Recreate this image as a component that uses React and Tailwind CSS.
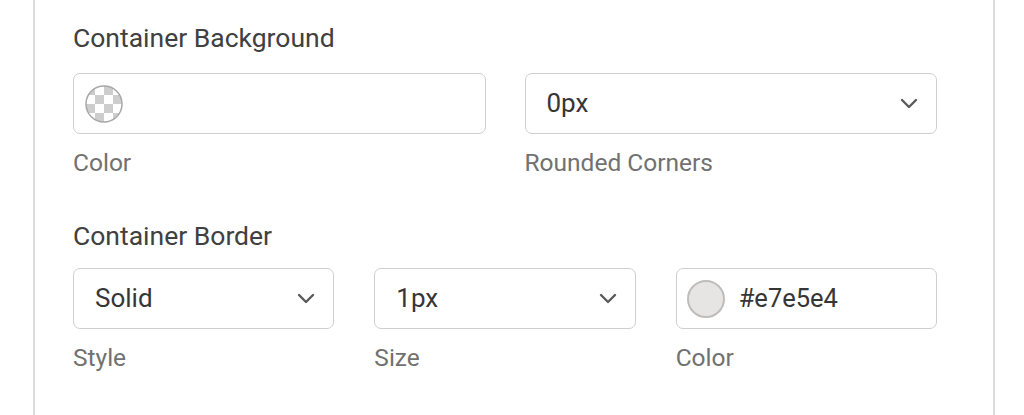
import React from "react";

function Chevron() {
  return (
    <svg width="18" height="11" viewBox="0 0 18 11" fill="none" className="shrink-0">
      <path d="M2 2l7 7 7-7" stroke="#5a5a5a" strokeWidth="2.4" strokeLinecap="round" strokeLinejoin="round" />
    </svg>
  );
}

function Checker() {
  return (
    <svg width="40" height="40" viewBox="0 0 40 40" className="shrink-0">
      <defs>
        <pattern id="chk" width="18" height="18" patternUnits="userSpaceOnUse" x="2" y="2">
          <rect width="18" height="18" fill="#ffffff" />
          <rect width="9" height="9" fill="#cdcdcd" />
          <rect x="9" y="9" width="9" height="9" fill="#cdcdcd" />
        </pattern>
        <clipPath id="cc">
          <circle cx="20" cy="20" r="18" />
        </clipPath>
      </defs>
      <rect width="40" height="40" fill="url(#chk)" clipPath="url(#cc)" />
      <circle cx="20" cy="20" r="18" fill="none" stroke="#a8a8a8" strokeWidth="1.5" />
    </svg>
  );
}

function Select({ value }) {
  return (
    <div className="flex h-[61px] items-center justify-between rounded-[7px] border border-[#cfcfcf] bg-white pl-[21px] pr-[18px]">
      <span className="text-[26px] text-[#363636]">{value}</span>
      <Chevron />
    </div>
  );
}

function Label({ children }) {
  return <div className="mt-[14px] text-[24.5px] leading-[30px] text-[#717171]">{children}</div>;
}

export default function App() {
  return (
    <div className="h-[415px] overflow-hidden bg-white" style={{ fontFamily: "Roboto, 'Liberation Sans', sans-serif" }}>
      <div className="ml-[33px] h-full w-[962px] border-x-2 border-[#dcdcdc] pl-[38px] pt-[20px]">
        <h3 className="text-[26.5px] leading-[36px] text-[#404040]">Container Background</h3>
        <div className="mt-[17px] grid w-[864px] grid-cols-2 gap-x-[39px]">
          <div>
            <div className="flex h-[61px] items-center rounded-[7px] border border-[#cfcfcf] bg-white pl-[10px]">
              <Checker />
            </div>
            <Label>Color</Label>
          </div>
          <div>
            <Select value="0px" />
            <Label>Rounded Corners</Label>
          </div>
        </div>

        <h3 className="mt-[40px] text-[26.5px] leading-[36px] text-[#404040]">Container Border</h3>
        <div className="mt-[14px] grid w-[864px] grid-cols-3 gap-x-[40px]">
          <div>
            <Select value="Solid" />
            <Label>Style</Label>
          </div>
          <div>
            <Select value="1px" />
            <Label>Size</Label>
          </div>
          <div>
            <div className="flex h-[61px] items-center gap-[14px] rounded-[7px] border border-[#cfcfcf] bg-white pl-[10px]">
              <span className="h-[38px] w-[38px] shrink-0 rounded-full border-2 border-[#bdbdbd] bg-[#e7e5e4]" />
              <span className="text-[25.5px] text-[#363636]">#e7e5e4</span>
            </div>
            <Label>Color</Label>
          </div>
        </div>
      </div>
    </div>
  );
}
